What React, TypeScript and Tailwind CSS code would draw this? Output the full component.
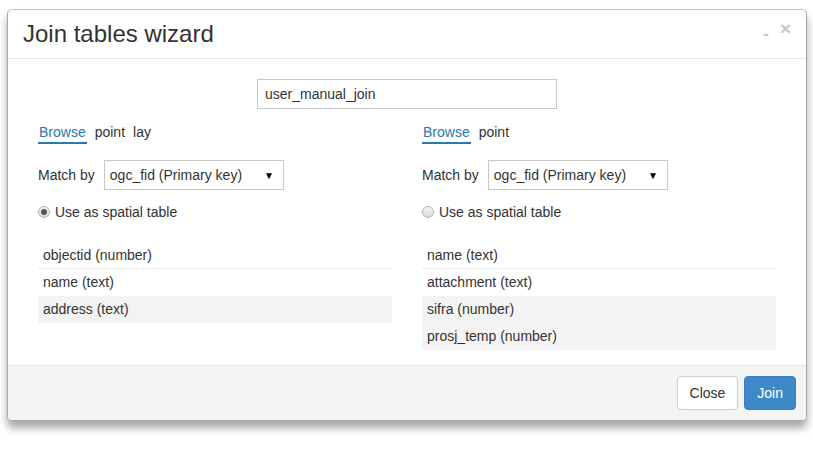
import React from "react";

interface Side {
  layer: string[];
  spatial: boolean;
  fields: { label: string; shaded: boolean }[];
}

const sides: Side[] = [
  {
    layer: ["point", "lay"],
    spatial: true,
    fields: [
      { label: "objectid (number)", shaded: false },
      { label: "name (text)", shaded: false },
      { label: "address (text)", shaded: true },
    ],
  },
  {
    layer: ["point"],
    spatial: false,
    fields: [
      { label: "name (text)", shaded: false },
      { label: "attachment (text)", shaded: false },
      { label: "sifra (number)", shaded: true },
      { label: "prosj_temp (number)", shaded: true },
    ],
  },
];

const TableColumn: React.FC<{ side: Side }> = ({ side }) => (
  <div className="px-[15px]">
    {/* izvor tablice */}
    <div className="flex items-start h-[22px]">
      <span className="text-[#2a7aae] border-b-2 border-[#2a7aae] px-px leading-5">Browse</span>
      {side.layer.map((l, i) => (
        <span key={i} className="ml-2 leading-5">{l}</span>
      ))}
    </div>

    <div className="flex items-center mt-4 h-[30px]">
      <span className="mr-[9px]">Match by</span>
      <div className="flex items-center justify-between w-[180px] h-[30px] border border-[#c8c8c8] pl-[5px] pr-[9px] bg-white">
        <span>ogc_fid (Primary key)</span>
        <span className="text-[10px] text-black">▼</span>
      </div>
    </div>

    <label className="flex items-center mt-[12px] h-5">
      <span className="w-[12px] h-[12px] rounded-full border border-[#b5b5b5] bg-gradient-to-b from-[#f4f4f4] to-[#dcdcdc] flex items-center justify-center">
        {side.spatial && <span className="w-[6px] h-[6px] rounded-full bg-[#555]" />}
      </span>
      <span className="ml-[5px]">Use as spatial table</span>
    </label>

    <div className="mt-[20px]">
      {side.fields.map((f, i) => (
        <div
          key={f.label}
          className={`h-[27px] px-[5px] flex items-center ${f.shaded ? "bg-[#f3f3f3]" : "bg-white"} ${
            i === 0 ? "border-b border-[#ececec]" : ""
          }`}
        >
          {f.label}
        </div>
      ))}
    </div>
  </div>
);

export default function App() {
  return (
    <div className="bg-white w-[813px] h-[454px] pt-[9px] pl-[7px] text-[14px] text-[#333]" style={{ fontFamily: '"Liberation Sans", Arial, sans-serif' }}>
      <div className="w-[800px] border border-[#a8a8a8] border-t-[#c4c4c4] rounded-[5px] bg-white shadow-[0_7px_9px_rgba(0,0,0,0.35)] overflow-hidden">
        {/* zaglavlje */}
        <div className="flex items-start justify-between pl-[15px] pr-[15px] pt-[11px] pb-[11px] border-b border-[#e5e5e5]">
          <h4 className="text-[24px] leading-[26px]">Join tables wizard</h4>
          <div className="flex items-start text-[#c8c8c8] font-bold mt-[-2px]">
            <span className="text-[18px] leading-none mt-[6px]">-</span>
            <span className="text-[19px] leading-none ml-[11px]">×</span>
          </div>
        </div>

        {/* tijelo */}
        <div className="px-[15px] pt-[20px] pb-[15px]">
          <div className="flex justify-center">
            <div className="w-[300px] h-[30px] border border-[#c8c8c8] flex items-center pl-[7px]">
              user_manual_join
            </div>
          </div>
          <div className="grid grid-cols-2 mt-[13px]">
            {sides.map((s, i) => (
              <TableColumn key={i} side={s} />
            ))}
          </div>
        </div>

        {/* podnožje */}
        <div className="bg-[#f4f4f4] border-t border-[#e5e5e5] flex justify-end items-center gap-[6px] pr-[10px] pt-[10px] pb-[10px]">
          <button className="h-[34px] px-3 bg-white border border-[#ccc] rounded-[4px] text-[#333]">Close</button>
          <button className="h-[34px] px-3 bg-[#3f89c8] border border-[#3a7fbb] rounded-[4px] text-white">Join</button>
        </div>
      </div>
    </div>
  );
}
